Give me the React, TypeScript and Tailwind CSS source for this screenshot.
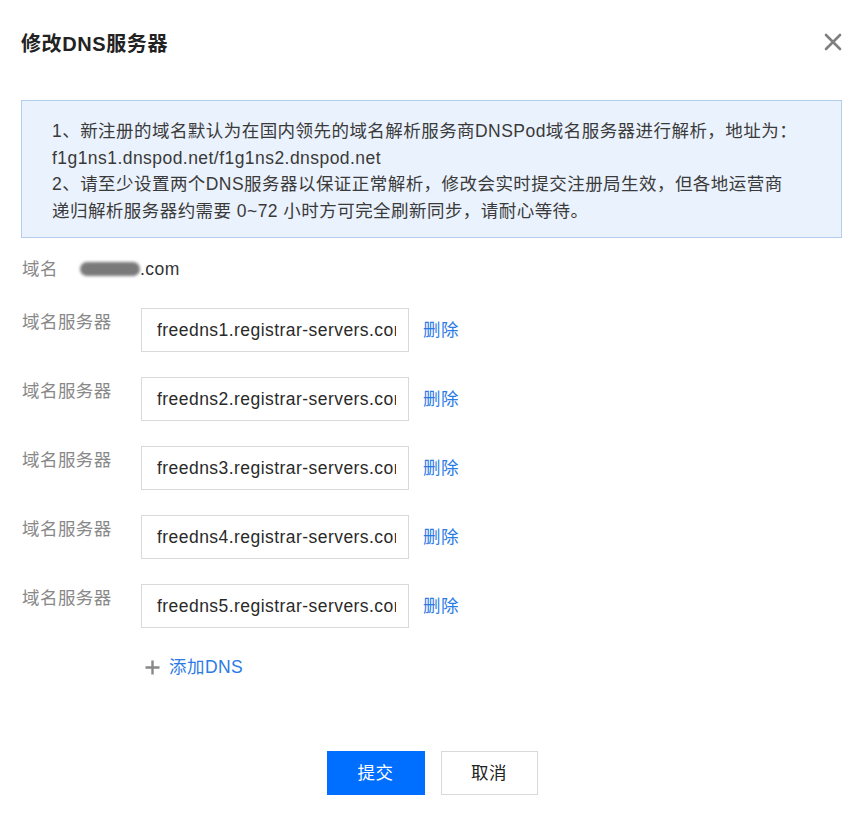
import React from 'react';

const servers = [
  'freedns1.registrar-servers.com',
  'freedns2.registrar-servers.com',
  'freedns3.registrar-servers.com',
  'freedns4.registrar-servers.com',
  'freedns5.registrar-servers.com',
];

function CloseIcon() {
  return (
    <svg width="18" height="18" viewBox="0 0 18 18" fill="none">
      <path d="M2 2L16 16M16 2L2 16" stroke="#7f7f7f" strokeWidth="2.6" strokeLinecap="round" />
    </svg>
  );
}

function PlusIcon() {
  return (
    <svg width="15" height="15" viewBox="0 0 15 15" fill="none">
      <path d="M7.5 0.5V14.5M0.5 7.5H14.5" stroke="#888" strokeWidth="2.4" />
    </svg>
  );
}

export default function App() {
  return (
    <div
      className="w-[864px] h-[816px] bg-white text-[17.5px] tracking-[0.45px] text-[#333]"
      style={{ fontFamily: '"Liberation Sans", "Noto Sans CJK SC", sans-serif' }}
    >
      <div className="flex items-center justify-between pl-[21px] pr-[22px] pt-[32px]">
        <h1 className="text-[20px] leading-[24px] font-bold tracking-[0.6px] text-[#222]">修改DNS服务器</h1>
        <button className="flex items-center justify-center w-[18px] h-[18px] -mt-[4px]">
          <CloseIcon />
        </button>
      </div>

      <div className="mt-[44px] ml-[21px] mr-[22px] border border-[#b3cdee] bg-[#eaf2fd] pl-[30px] pr-[20px] pt-[17px] pb-[13px] leading-[26.5px] text-[#3a3a3a]">
        <p>1、新注册的域名默认为在国内领先的域名解析服务商DNSPod域名服务器进行解析，地址为：</p>
        <p>f1g1ns1.dnspod.net/f1g1ns2.dnspod.net</p>
        <p>2、请至少设置两个DNS服务器以保证正常解析，修改会实时提交注册局生效，但各地运营商</p>
        <p>递归解析服务器约需要 0~72 小时方可完全刷新同步，请耐心等待。</p>
      </div>

      <div className="flex items-center mt-[18px] pl-[22px] leading-[26px]">
        <span className="w-[58px] text-[#888]">域名</span>
        <span className="w-[60px] h-[14px] rounded-full bg-[#7a7a7a] blur-[1.5px]" />
        <span className="text-[#333]">.com</span>
      </div>

      <div className="flex flex-col gap-[25px] mt-[26px] pl-[22px]">
        {servers.map((s) => (
          <div key={s} className="flex items-start">
            <span className="w-[119px] leading-[26px] mt-[1px] text-[#888]">域名服务器</span>
            <input
              readOnly
              defaultValue={s}
              className="w-[268px] h-[44px] border border-[#d9d9d9] pl-[15px] pr-[12px] text-[17.5px] tracking-[0.45px] text-[#2a2a2a] outline-none"
            />
            <a className="ml-[14px] h-[44px] flex items-center text-[#2c7be5] cursor-pointer">删除</a>
          </div>
        ))}
      </div>

      <div className="flex items-center mt-[26px] pl-[145px] leading-[26px]">
        <PlusIcon />
        <span className="ml-[9px] text-[#2c7be5]">添加DNS</span>
      </div>

      <div className="flex justify-center gap-[16px] mt-[71px]">
        <button className="w-[98px] h-[44px] bg-[#006eff] text-white">提交</button>
        <button className="w-[97px] h-[44px] border border-[#d9d9d9] bg-white text-[#222]">取消</button>
      </div>
    </div>
  );
}
